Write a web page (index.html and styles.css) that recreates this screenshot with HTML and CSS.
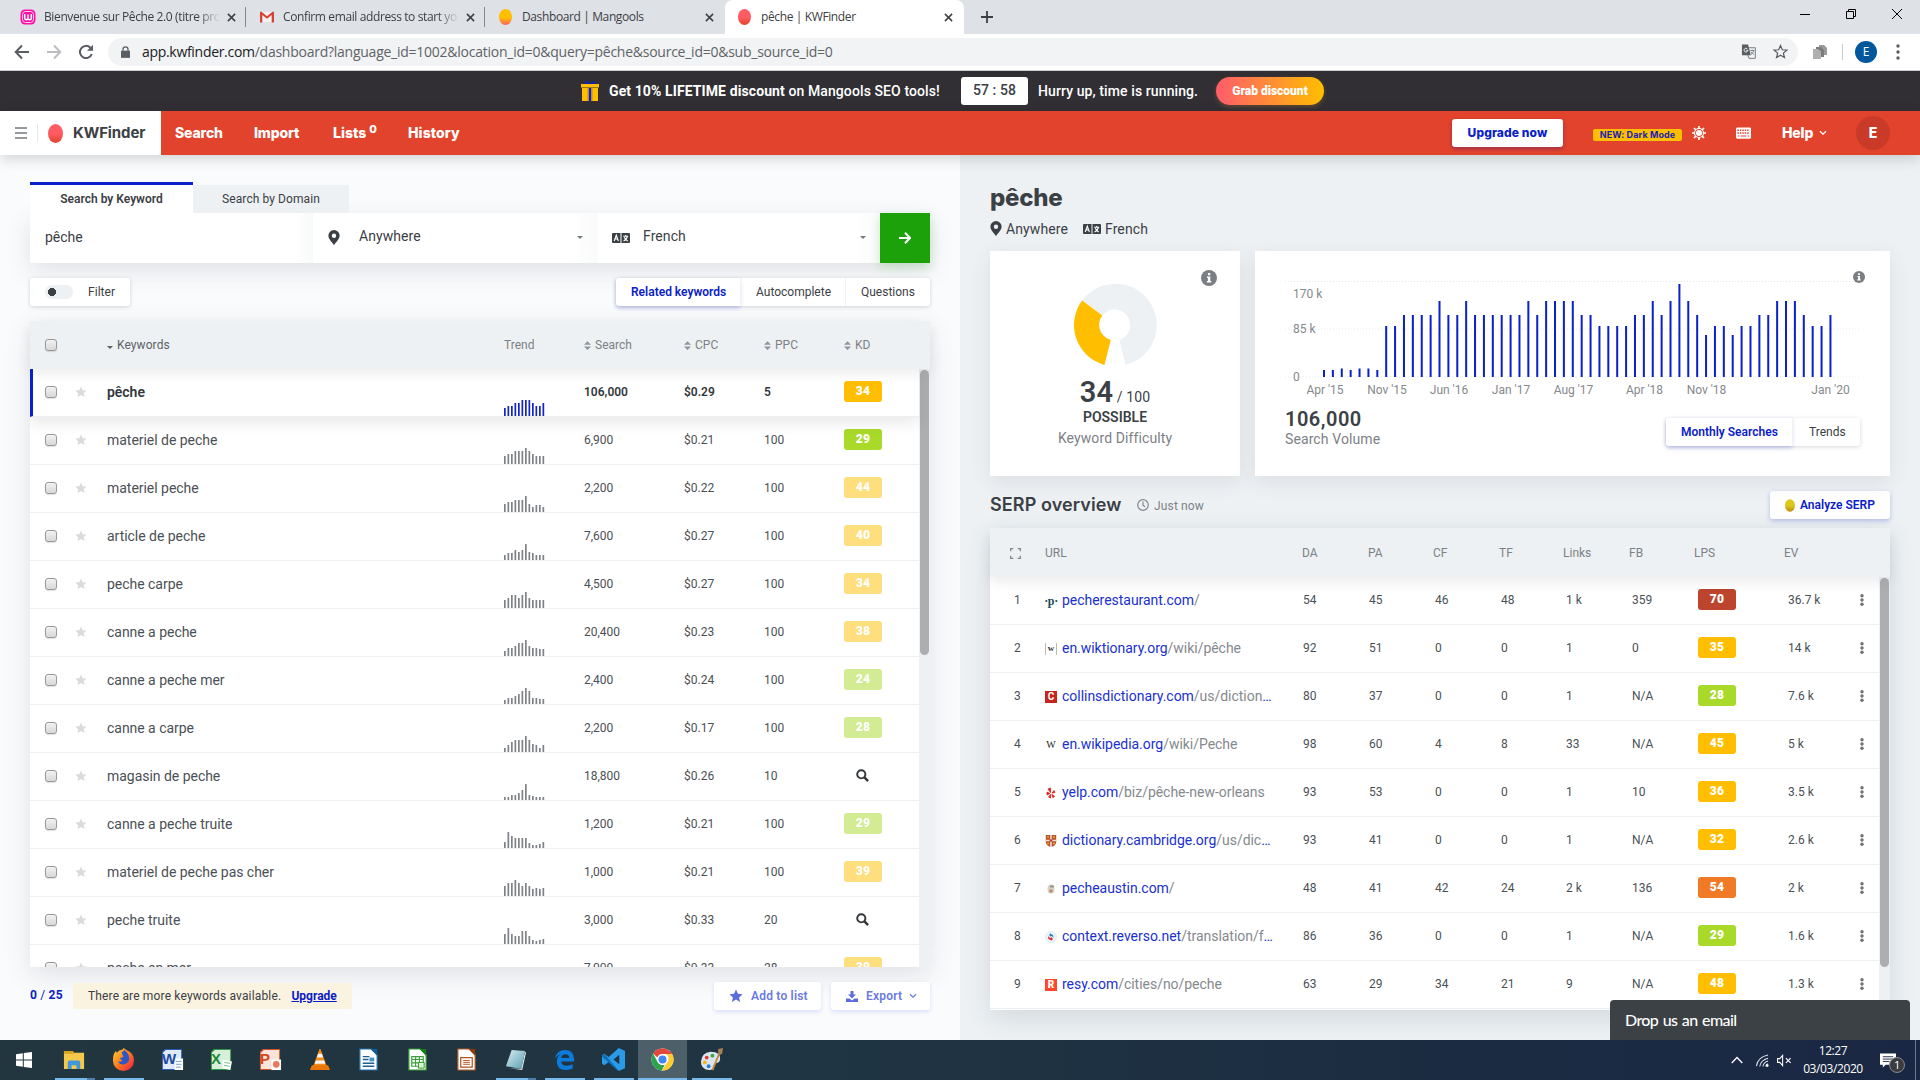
FILE: index.html
```
<!DOCTYPE html>
<html lang="en">
<head>
<meta charset="utf-8">
<title>pêche | KWFinder</title>
<link rel="stylesheet" href="styles.css">
</head>
<body>
<svg class="defs" width="0" height="0" aria-hidden="true">
  <defs>
    <linearGradient id="gRed" x1="0" y1="0" x2="0" y2="1"><stop offset=".5" stop-color="#ff5c63"/><stop offset="1" stop-color="#e2432c"/></linearGradient>
    <linearGradient id="gYel" x1="0" y1="0" x2="0" y2="1"><stop offset=".55" stop-color="#ffbe00"/><stop offset="1" stop-color="#ff6060"/></linearGradient>
    <linearGradient id="gGold" x1="0" y1="0" x2="0" y2="1"><stop offset=".5" stop-color="#dcc81c"/><stop offset="1" stop-color="#c08a10"/></linearGradient>
    <linearGradient id="gFox" x1="0" y1="0" x2="1" y2="1"><stop offset="0" stop-color="#ffd23a"/><stop offset=".5" stop-color="#ff7a1a"/><stop offset="1" stop-color="#e5154f"/></linearGradient>
    <linearGradient id="gNote" x1="0" y1="0" x2="1" y2="1"><stop offset="0" stop-color="#d8eef2"/><stop offset="1" stop-color="#5a9db0"/></linearGradient>
  </defs>
  <symbol id="x" viewBox="0 0 10 10"><path d="M1 1l8 8M9 1L1 9" stroke="#3c4043" stroke-width="1.7" fill="none"/></symbol>
  <symbol id="pin" viewBox="0 0 12 15"><path fill="#3b4045" fill-rule="evenodd" d="M6 0a5.6 5.6 0 0 1 5.600 5.700C11.600 9 8 12 6 15 4 12 .4 9 .4 5.700A5.600 5.600 0 0 1 6 0zm0 3.500a2.200 2.200 0 1 0 0 4.400 2.200 2.200 0 0 0 0-4.400z"/></symbol>
  <symbol id="lang" viewBox="0 0 18 10"><path fill="#3b4045" d="M1 0h7.500v10H1a1 1 0 0 1-1-1V1a1 1 0 0 1 1-1zM9.500 0H17a1 1 0 0 1 1 1v8a1 1 0 0 1-1 1H9.500z"/><path d="M2.200 8L4.300 2.200 6.400 8M3 6h2.700M11.200 3.300h5M13.700 2v1.300M15.400 3.500c-.5 2-2 3.600-3.800 4.500M12.300 4.300c.6 1.700 1.900 3 3.500 3.700" fill="none" stroke="#fff" stroke-width="1.100"/></symbol>
  <symbol id="star" viewBox="0 0 24 24"><path d="M12 1l3.300 7.300 7.900.8-5.900 5.300 1.700 7.800-7-4-7 4 1.700-7.800L.8 9.100l7.900-.8z"/></symbol>
  <symbol id="sort" viewBox="0 0 8 10"><path d="M0 4L4 0l4 4zM0 6h8L4 10z" fill="#8f959a"/></symbol>
  <symbol id="mag" viewBox="0 0 14 14"><circle cx="5.700" cy="5.700" r="4.400" fill="none" stroke="#33383d" stroke-width="2.100"/><path d="M8.800 8.800l4.200 4.200" stroke="#33383d" stroke-width="2.600"/></symbol>
  <symbol id="info" viewBox="0 0 16 16"><circle cx="8" cy="8" r="8" fill="#7b7f83"/><path d="M6.900 3h2.400v2.200H6.900zM6 6.500h3.300v4.600h1v1.500H5.900v-1.500h1V8H6z" fill="#fff"/></symbol>
  <symbol id="down" viewBox="0 0 8 6"><path d="M1 1.200l3 3 3-3" fill="none" stroke="currentColor" stroke-width="1.300"/></symbol>
</svg>

<header class="tabstrip">
  <div class="tab"><svg class="fav" viewBox="0 0 16 16"><rect x=".5" y=".5" width="15" height="15" rx="4.500" fill="#ff0fa5"/><rect x="2.500" y="2.500" width="11" height="11" rx="3" fill="none" stroke="#fff" stroke-width=".8"/><path d="M4.700 5v4q0 1.700 1.600 1.700T8 9V5.500V9q0 1.700 1.700 1.700T11.300 9V5" fill="none" stroke="#fff" stroke-width="1.500"/></svg><span class="tt fade">Bienvenue sur Pêche 2.0 (titre prov</span><svg class="cx"><use href="#x"/></svg></div>
  <div class="tab"><svg class="fav" viewBox="0 0 16 16"><path d="M1 3h14v10H1z" fill="#f1f1f1"/><path d="M1 13.500V2.800h1.500L8 7.300l5.500-4.500H15v10.700h-2.300V6L8 9.800 3.300 6v7.500z" fill="#d93f33"/></svg><span class="tt fade">Confirm email address to start you</span><svg class="cx"><use href="#x"/></svg></div>
  <div class="tab"><svg class="fav" viewBox="0 0 16 16"><ellipse cx="7.500" cy="8" rx="6.500" ry="8" fill="url(#gYel)"/></svg><span class="tt">Dashboard | Mangools</span><svg class="cx"><use href="#x"/></svg></div>
  <div class="tab on"><svg class="fav" viewBox="0 0 16 16"><ellipse cx="7.500" cy="8" rx="6.500" ry="8" fill="url(#gRed)"/></svg><span class="tt">pêche | KWFinder</span><svg class="cx"><use href="#x"/></svg></div>
  <svg class="plus" viewBox="0 0 12 12"><path d="M6 0v12M0 6h12" stroke="#3c4043" stroke-width="1.800"/></svg>
  <div class="winbtns">
    <svg viewBox="0 0 10 10"><path d="M0 5.500h10" stroke="#000"/></svg>
    <svg viewBox="0 0 10 10"><path d="M.5 2.500h7v7h-7zM2.500 2.500v-2h7v7h-2" fill="none" stroke="#000"/></svg>
    <svg viewBox="0 0 10 10"><path d="M0 0l10 10M10 0L0 10" stroke="#000"/></svg>
  </div>
</header>

<div class="toolbar">
  <div class="navs">
    <svg viewBox="0 0 16 16"><path d="M15 8H2M8 1.500L1.700 8 8 14.500" fill="none" stroke="#5a5d61" stroke-width="2"/></svg>
    <svg viewBox="0 0 16 16"><path d="M1 8h13M8 1.500L14.300 8 8 14.500" fill="none" stroke="#bbbdc0" stroke-width="2"/></svg>
    <svg viewBox="0 0 16 16"><path d="M13.800 10a6.100 6.100 0 1 1-1.400-6.300" fill="none" stroke="#5a5d61" stroke-width="2"/><path d="M15 .8v6H9z" fill="#5a5d61"/></svg>
  </div>
  <div class="omni">
    <svg class="lock" viewBox="0 0 10 13"><path d="M0 5h10v8H0z" fill="#5a5d61"/><path d="M2.200 5V3.500a2.800 2.800 0 0 1 5.600 0V5" fill="none" stroke="#5a5d61" stroke-width="1.400"/></svg>
    <span class="url"><b>app.kwfinder.com</b>/dashboard?language_id=1002&amp;location_id=0&amp;query=pêche&amp;source_id=0&amp;sub_source_id=0</span>
    <svg class="oi" viewBox="0 0 16 16"><path d="M7 4h8.300v11.300H8.500L7 11z" fill="#f1f3f4" stroke="#74777b"/><path d="M1 .5h6.500l3 11.500H1z" fill="#5a5d61"/><path d="M7 5.500a2 2 0 1 0 .3 1.300H5.500" fill="none" stroke="#fff" stroke-width="1"/><path d="M9.800 7h4.500M12 6v1M13.500 7c-.3 1.800-1.300 3-2.800 4M10.800 8.500l3 3" fill="none" stroke="#74777b"/></svg>
    <svg class="oi" viewBox="0 0 24 24"><path d="M12 2.500l2.900 6.700 7.200.6-5.500 4.800 1.700 7.100-6.300-3.800-6.300 3.800 1.700-7.100L1.900 9.800l7.200-.6z" fill="none" stroke="#5a5d61" stroke-width="2"/></svg>
  </div>
  <svg class="ext" viewBox="0 0 14 14"><path d="M6 0h5l3 3v7H6z" fill="#9a9a9a"/><path d="M3 2h5l3 3v7H3z" fill="#7c7c7c"/><path d="M0 4h5l3 2.500V14H0z" fill="#b0b0b0"/></svg>
  <i class="vsep"></i>
  <span class="av">E</span>
  <svg class="kebab" viewBox="0 0 4 16"><g fill="#5a5d61"><circle cx="2" cy="2" r="1.700"/><circle cx="2" cy="8" r="1.700"/><circle cx="2" cy="14" r="1.700"/></g></svg>
</div>

<div class="promo">
  <svg class="gift" viewBox="0 0 18 20"><path d="M4 0q3 0 5 3 2-3 5-3l-1 3.500H5z" fill="#0a20d0"/><path d="M0 3h18v3.500H0zM1 7h16v13H1z" fill="#ffbe00"/><path d="M7.700 7h2.600v13H7.700z" fill="#0a20d0"/><path d="M6.500 7v13M11.500 7v13" stroke="#d99c00" stroke-width=".7"/></svg>
  <span class="ptext"><b>Get 10% LIFETIME discount</b> on Mangools SEO tools!</span>
  <span class="timer">57 : 58</span>
  <span class="hurry">Hurry up, time is running.</span>
  <span class="grab">Grab discount</span>
</div>

<nav class="appbar">
  <div class="brand">
    <svg class="burger" viewBox="0 0 12 12"><path d="M0 1h12M0 6h12M0 11h12" stroke="#76797d" stroke-width="1.500"/></svg>
    <i></i>
    <svg class="mango" viewBox="0 0 15 19"><ellipse cx="7.500" cy="9.500" rx="7.500" ry="9.500" fill="url(#gRed)"/></svg>
    <span>KWFinder</span>
  </div>
  <div class="links"><a>Search</a><a>Import</a><a>Lists <sup>0</sup></a><a>History</a></div>
  <div class="right">
    <span class="upnow">Upgrade now</span>
    <span class="newdm">NEW: Dark Mode</span>
    <svg class="sun" viewBox="0 0 14 14"><circle cx="7" cy="7" r="3" fill="#fff"/><circle cx="7" cy="7" r="4.500" fill="none" stroke="#fff" stroke-width="1.200"/><path d="M7 0v3M7 11v3M0 7h3M11 7h3M2 2l2 2M10 10l2 2M12 2l-2 2M4 10l-2 2" stroke="#fff" stroke-width="1.700"/></svg>
    <svg class="kb" viewBox="0 0 16 12"><rect width="16" height="12" rx="1.500" fill="#fff"/><path d="M1.500 3h13M1.500 6h13" stroke="#e2432c" stroke-width="1.500" stroke-dasharray="1.600 1"/><path d="M2 9.200h1.500M5 9.200h6M12.500 9.200H14" stroke="#e2432c" stroke-width="1.200"/></svg>
    <span class="help">Help</span><svg class="chev"><use href="#down"/></svg>
    <span class="me">E</span>
  </div>
</nav>

<main>
  <section class="left">
    <div class="stabs"><span class="stab on">Search by Keyword</span><span class="stab">Search by Domain</span></div>
    <div class="sform">
      <div class="f1">pêche</div>
      <div class="f2"><svg class="pin"><use href="#pin"/></svg><span>Anywhere</span><i class="caret"></i></div>
      <div class="f3"><svg class="lang"><use href="#lang"/></svg><span>French</span><i class="caret"></i></div>
      <div class="go"><svg viewBox="0 0 12 12"><path d="M0 6h11M6 .8L11 6l-5 5.200" fill="none" stroke="#fff" stroke-width="2"/></svg></div>
    </div>
    <div class="filters">
      <div class="filter"><i class="toggle"></i>Filter</div>
      <div class="seg"><span class="on">Related keywords</span><span>Autocomplete</span><span>Questions</span></div>
    </div>
    <div class="kwtable">
      <div class="kwhead">
        <i class="cb"></i><span></span>
        <span class="dark"><i class="tri"></i>Keywords</span><span>Trend</span>
        <span><svg class="sort"><use href="#sort"/></svg>Search</span>
        <span><svg class="sort"><use href="#sort"/></svg>CPC</span>
        <span><svg class="sort"><use href="#sort"/></svg>PPC</span>
        <span><svg class="sort"><use href="#sort"/></svg>KD</span>
      </div>
      <div class="scroller"><div class="rows" id="kwrows"></div><div class="track"><i class="thumb t1"></i></div></div>
    </div>
    <div class="kwfoot">
      <span class="count"><b>0</b> / <b>25</b></span>
      <span class="notice">There are more keywords available. <a>Upgrade</a></span>
      <span class="btn add"><svg viewBox="0 0 24 24"><use href="#star"/></svg>Add to list</span>
      <span class="btn exp"><svg viewBox="0 0 12 11"><path d="M4.500 0h3v3.500H10L6 7.500l-4-4h2.500zM0 7.500h3.500L6 9.500l2.500-2H12V11H0z"/></svg>Export<svg class="chev"><use href="#down"/></svg></span>
    </div>
  </section>

  <section class="side">
    <h1>pêche</h1>
    <div class="meta"><svg class="pin"><use href="#pin"/></svg><span>Anywhere</span><svg class="lang"><use href="#lang"/></svg><span>French</span></div>
    <div class="cards">
      <div class="card kd">
        <svg class="info"><use href="#info"/></svg>
        <svg class="donut" viewBox="-42 -42 84 84">
          <path d="M-32.900-24.500A41.300 41.300 0 1 1 10.800 39.900L4.200 15A15.600 15.600 0 1 0-12.700-9.500z" fill="#edf1f4"/>
          <path d="M-10.600 39.900A41.300 41.300 0 0 1-32.900-24.500L-12.700-9.500A15.600 15.600 0 0 0-4.200 15z" fill="#ffbe00"/>
        </svg>
        <div class="score"><b>34</b> / 100</div>
        <div class="poss">POSSIBLE</div>
        <div class="cap">Keyword Difficulty</div>
      </div>
      <div class="card vol">
        <svg class="chart" id="chart" viewBox="0 0 575 125"></svg>
        <svg class="info small"><use href="#info"/></svg>
        <div class="volrow">
          <div><div class="num">106,000</div><div class="cap">Search Volume</div></div>
          <div class="seg"><span class="on">Monthly Searches</span><span>Trends</span></div>
        </div>
      </div>
    </div>
    <div class="serphead">
      <h2>SERP overview</h2>
      <svg class="clock" viewBox="0 0 12 12"><circle cx="6" cy="6" r="5.300" fill="none" stroke="#85898d" stroke-width="1.200"/><path d="M6 2.500V6.200l2 1.500" fill="none" stroke="#85898d" stroke-width="1.200"/></svg>
      <span class="just">Just now</span>
      <span class="analyze"><svg viewBox="0 0 10 13"><ellipse cx="5" cy="6.500" rx="5" ry="6.200" fill="url(#gGold)"/></svg>Analyze SERP</span>
    </div>
    <div class="serp">
      <div class="shead"><span><svg class="expand" viewBox="0 0 10 10"><path d="M.6 3V.6H3M7 .6h2.400V3M9.400 7v2.400H7M3 9.400H.6V7" fill="none" stroke="#85898d" stroke-width="1.200"/></svg></span><span>URL</span><span>DA</span><span>PA</span><span>CF</span><span>TF</span><span>Links</span><span>FB</span><span>LPS</span><span>EV</span></div>
      <div class="scroller"><div class="rows" id="serprows"></div><div class="track"><i class="thumb t2"></i></div></div>
    </div>
  </section>
</main>

<div class="chat">Drop us an email</div>

<footer class="taskbar">
  <div class="ti win"><svg viewBox="0 0 24 24"><path d="M4 6.200l6.800-1v6.300H4zM11.800 5L20 4v7.500h-8.200zM4 12.500h6.800v6.300l-6.800-1zM11.800 12.500H20V20l-8.200-1z" fill="#fff"/></svg></div>
  <div class="ti run two"><svg viewBox="0 0 24 24"><path d="M1 3h9l2 2h10v17H1z" fill="#f5c84b"/><path d="M1 3h9l2 3H1z" fill="#d9a21b"/><path d="M5 22v-7q0-2 2-2h9q2 0 2 2v7h-4v-4H9v4z" fill="#3f98dc"/></svg></div>
  <div class="ti run"><svg viewBox="0 0 24 24"><path d="M2 6l2-3 1 2q2-3 6-3.500l1-1.500 3 2q8 3 8 11a11 11 0 0 1-22 0Q1 9 2 6z" fill="url(#gFox)"/><path d="M10 5l3-3q5 4 5 9a6.500 6.500 0 0 1-12 3q3 1 5-1l-3-2 4-2z" fill="#2b57c9"/></svg></div>
  <div class="ti"><svg viewBox="0 0 24 24"><path d="M4 1h18v22H1V4z" fill="#2b5bb3"/><path d="M5 2h16v20H2V5z" fill="#dfe9f8"/><path d="M15 11h8v12H14z" fill="#fff"/><path d="M15.500 14h6M15.500 17h6M15.500 20h5" stroke="#7b9bd0"/></svg><b class="wd">W</b></div>
  <div class="ti"><svg viewBox="0 0 24 24"><path d="M4 1h18v22H1V4z" fill="#2f9a45"/><path d="M5 2h16v20H2V5z" fill="#d6efd6"/><path d="M13 12l10 2-2 9-8-2z" fill="#fff"/><path d="M15 15l6 1M14.500 18l6 1" stroke="#6fbf7c"/></svg><b class="xl">X</b></div>
  <div class="ti"><svg viewBox="0 0 24 24"><path d="M4 1h18v22H1V4z" fill="#d4522a"/><path d="M5 2h16v20H2V5z" fill="#fbe3d8"/><path d="M13 12h10v11H13z" fill="#fff"/><circle cx="18" cy="17" r="3.500" fill="#e8795a"/></svg><b class="pp">P</b></div>
  <div class="ti"><svg viewBox="0 0 24 24"><path d="M12 1h1l7 19H5z" fill="#f58a1c"/><path d="M10.500 6h4l1.300 4H9.200zM8.200 13h8.700l1 3.500H7z" fill="#f4f4f4"/><path d="M4 18h17l2 5H2z" fill="#e97808"/></svg></div>
  <div class="ti"><svg viewBox="0 0 24 24"><path d="M3 1h12l6 6v16H3z" fill="#fff" stroke="#1f6fae" stroke-width="1.200"/><path d="M14 1h7v7z" fill="#0f5f9f"/><path d="M6 9h7M6 12h6M6 16h12M6 19h12" stroke="#1f5f94" stroke-width="1.500"/><path d="M13 10h5v4h-5z" fill="#4591c6"/></svg></div>
  <div class="ti"><svg viewBox="0 0 24 24"><path d="M3 1h12l6 6v16H3z" fill="#fff" stroke="#2c9a2c" stroke-width="1.200"/><path d="M14 1h7v7z" fill="#128012"/><path d="M6 9h12v10H6zM6 12h12M6 15.500h12M10 9v10M14 9v10" fill="none" stroke="#3c9f3c" stroke-width="1.200"/><path d="M13 15h6v6h-6z" fill="#d8f0d0" stroke="#2c9a2c"/></svg></div>
  <div class="ti"><svg viewBox="0 0 24 24"><path d="M3 1h12l6 6v16H3z" fill="#fff" stroke="#b3561f" stroke-width="1.200"/><path d="M14 1h7v7z" fill="#8f3d0c"/><path d="M6 10h12v10H6z" fill="none" stroke="#b3561f" stroke-width="1.300"/><path d="M8.500 13h7M8.500 15h7M8.500 17h7" stroke="#b3561f"/></svg></div>
  <div class="ti run two"><svg viewBox="0 0 24 24"><path d="M8 2l14 1-4 19-16-3z" fill="url(#gNote)"/><path d="M22 4l1 1-4 18-14-2 13 1z" fill="#dfe6e8"/></svg></div>
  <div class="ti run"><svg viewBox="0 0 24 24"><path d="M2 11Q4 2 12.500 2 22 2 22 12v2H8.500q.5 4.500 6 4.500 3.500 0 6-1.500v4.500q-3 1.500-7 1.500-9.500 0-9.500-9 0-5 4.500-8-3.500 1-6.500 5zM8.500 10.500H17q0-4-4-4t-4.500 4z" fill="#0c7bdc"/></svg></div>
  <div class="ti run"><svg viewBox="0 0 24 24"><path d="M17.500 0L24 3v18l-6.500 3L7 14.500 2.500 18 0 16.500v-9L2.500 6 7 9.500zM18 7l-6 5 6 5z" fill="#2a9be8"/><path d="M0 7.500L2.500 6l15 18H17L0 9z" fill="#0f70b8"/></svg></div>
  <div class="ti run active"><svg viewBox="0 0 24 24"><circle cx="12" cy="12" r="11.500" fill="#fff"/><path d="M12 .5A11.500 11.500 0 0 1 22 6.300H12a5.700 5.700 0 0 0-5.300 3.600L2.200 5.800A11.500 11.500 0 0 1 12 .5z" fill="#e0483a"/><path d="M22 6.300A11.500 11.500 0 0 1 11.500 23.500l5.200-8.400a5.700 5.700 0 0 0-1-8.800z" fill="#fbcb2f"/><path d="M2.200 5.800L7 14.900a5.700 5.700 0 0 0 7.500 2.300l-3.300 6.300A11.500 11.500 0 0 1 2.200 5.800z" fill="#2ea24c"/><circle cx="12" cy="12" r="5.400" fill="#fff"/><circle cx="12" cy="12" r="4.200" fill="#4285f4"/></svg></div>
  <div class="ti run"><svg viewBox="0 0 24 24"><path d="M11 4q11 0 10 8-1 4-5 4-2 1-2 4-1 3-5 3-8-1-8-9Q2 5 11 4z" fill="#d9e6f0"/><circle cx="7" cy="10" r="2" fill="#e03c31"/><circle cx="13" cy="8" r="2" fill="#3aa845"/><circle cx="5" cy="15" r="2" fill="#f5b51d"/><circle cx="9" cy="19" r="2" fill="#2f78d0"/><path d="M20 6l-7 17" stroke="#c6873c" stroke-width="2"/><path d="M19 1l5-1-1 6-4 2z" fill="#a98257"/></svg></div>
  <div class="tray">
    <svg class="up" viewBox="0 0 12 8"><path d="M.7 7L6 1.500 11.300 7" fill="none" stroke="#fff" stroke-width="1.300"/></svg>
    <svg class="wifi" viewBox="0 0 14 14"><path d="M.5 13Q2 3 13 1M4 13.500q1-7 9-9M7.500 13.500q.5-4.500 5.500-6M10.500 13.500q.3-2 2.500-3" fill="none" stroke="#dfe4ea" stroke-width="1.100"/><circle cx="12" cy="12.500" r="1.500" fill="#fff"/></svg>
    <svg class="volu" viewBox="0 0 16 13"><path d="M.6 4.500H3L6 1v11L3 8.500H.6z" fill="none" stroke="#fff" stroke-width="1.100"/><path d="M9.500 4l5 5M14.500 4l-5 5" stroke="#fff" stroke-width="1.200"/></svg>
    <div class="time"><span>12:27</span><span>03/03/2020</span></div>
    <div class="notif"><svg viewBox="0 0 17 15"><path d="M0 0h17v12H6l-3 3v-3H0z" fill="#fff"/><path d="M3 3.500h11M3 6h11M3 8.500h7" stroke="#1c2b42"/></svg><em>1</em></div>
    <i class="peek"></i>
  </div>
</footer>
<script src="app.js"></script>
</body>
</html>
```
FILE: styles.css
```
* { box-sizing: border-box; }
html, body { margin: 0; height: 100%; overflow: hidden; }
body { width: 1920px; height: 1080px; display: flex; flex-direction: column; font: 12px/16px Roboto, "Liberation Sans", sans-serif; color: #3b4045; background: #fafbfd; }
i, em { font-style: normal; }
svg { flex: none; display: block; }
.defs { position: absolute; }
b { font-weight: 700; }

/* browser chrome */
.tabstrip { flex: none; height: 34px; background: #dee1e6; display: flex; align-items: center; padding-left: 8px; font: 12px/16px "Open Sans", "Noto Sans", sans-serif; color: #3c4043; }
.tab { width: 239px; height: 34px; display: flex; align-items: center; padding: 0 10px 0 12px; border-right: 1px solid transparent; }
.tab:nth-child(-n+2) { background: linear-gradient(#85888d, #85888d) 100% 7px / 1px 20px no-repeat; }
.tab.on { background: #fff; border-radius: 8px 8px 0 0; }
.fav { width: 16px; height: 16px; margin-right: 8px; }
.tt { width: 176px; overflow: hidden; white-space: nowrap; letter-spacing: -.38px; }
.fade { -webkit-mask-image: linear-gradient(90deg, #000 154px, transparent 176px); mask-image: linear-gradient(90deg, #000 154px, transparent 176px); }
.cx { width: 9px; height: 9px; margin-left: 8px; }
.plus { width: 12px; height: 12px; margin-left: 17px; }
.winbtns { margin-left: auto; display: flex; gap: 36px; padding: 0 18px 6px 0; }
.winbtns svg { width: 10px; height: 10px; }
.toolbar { flex: none; height: 37px; background: #fff; border-bottom: 1px solid #c9ccd0; display: flex; align-items: center; padding: 0 20px 0 14px; }
.navs { display: flex; gap: 16px; width: 94px; }
.navs svg { width: 16px; height: 16px; }
.omni { width: 1691px; height: 28px; margin-top: -1px; border-radius: 14px; background: #f1f3f4; display: flex; align-items: center; padding: 0 10px 0 13px; font: 14px/20px "Open Sans", "Noto Sans", sans-serif; color: #5f6368; }
.lock { width: 9px; height: 12px; margin-right: 12px; }
.url { flex: 1; letter-spacing: -.25px; white-space: nowrap; }
.url b { font-weight: 400; color: #202124; letter-spacing: -.3px; }
.oi { width: 15px; height: 15px; margin-left: 17px; }
.ext { width: 14px; height: 14px; margin-left: 15px; }
.vsep { width: 1px; height: 16px; background: #c8cace; margin: 0 12px 0 15px; }
.av { width: 22px; height: 22px; border-radius: 50%; background: #00579c; color: #fff; text-align: center; font: 12px/22px "Open Sans", sans-serif; }
.kebab { width: 4px; height: 16px; margin-left: 19px; }

/* promo bar */
.promo { flex: none; height: 40px; background: #312f34; color: #fff; display: flex; align-items: center; padding: 0 0 1px 581px; font-size: 14px; }
.gift { width: 18px; height: 20px; margin-right: 10px; }
.ptext { width: 352px; font-weight: 500; letter-spacing: .1px; white-space: nowrap; }
.timer { width: 67px; height: 28px; border-radius: 3px; background: #fff; color: #3b4045; text-align: center; font-weight: 500; line-height: 27px; letter-spacing: .1px; margin-top: 1px; }
.hurry { width: 178px; margin-left: 10px; font-weight: 500; letter-spacing: .1px; white-space: nowrap; }
.grab { width: 108px; height: 28px; margin-top: 1px; border-radius: 14px; background: linear-gradient(90deg, #ff5c6b, #ffbe00); font: 900 12px/28px Roboto, sans-serif; text-align: center; box-shadow: 0 2px 4px rgba(255, 150, 60, .25); }

/* application bar */
.appbar { flex: none; height: 44px; background: #e2432c; display: flex; align-items: stretch; color: #fff; position: relative; font: 800 14px/20px Inter, Roboto, sans-serif; letter-spacing: -.15px; box-shadow: 0 4px 14px rgba(0, 0, 0, .16); }
.brand { width: 161px; background: #fff; color: #3b4045; display: flex; align-items: center; padding-left: 15px; font-weight: 700; font-size: 15px; letter-spacing: -.1px; }
.burger { width: 12px; height: 12px; }
.brand i { width: 1px; height: 18px; background: #e6e8ea; margin: 0 10px; }
.mango { width: 15px; height: 19px; margin-right: 10px; }
.links { display: flex; align-items: center; padding-left: 14px; }
.links a { margin-right: 30px; white-space: nowrap; }
.links a:nth-child(-n+2) { width: 49px; }
.links a:nth-child(3) { width: 45px; letter-spacing: 0; }
.links a:nth-child(4) { letter-spacing: .1px; }
.links sup { font-size: 11px; line-height: 0; vertical-align: 5px; }
.right { margin-left: auto; display: flex; align-items: center; padding-right: 30px; }
.upnow { width: 111px; height: 28px; border-radius: 3px; background: #fff; color: #0a20c8; font-size: 12px; line-height: 28px; text-align: center; letter-spacing: .1px; box-shadow: 0 2px 4px rgba(60, 20, 120, .4); }
.newdm { width: 89px; height: 12px; margin: 4px 10px 0 30px; background: #ffbe00; color: #1a1fb0; border-radius: 2px; font: 700 9px/12px Inter, sans-serif; letter-spacing: .1px; text-align: center; }
.sun { width: 14px; height: 14px; }
.kb { width: 15px; height: 12px; margin: 0 31px 0 30px; }
.help { width: 36px; }
.chev { width: 8px; height: 6px; }
.appbar .chev { margin: 0 29px 0 1px; }
.me { width: 34px; height: 34px; border-radius: 50%; background: #c93b28; text-align: center; line-height: 34px; }

main { flex: none; height: 885px; display: flex; }
.left { width: 960px; background: #fafbfd; padding: 27px 30px 0; }
.side { width: 960px; background: #edf1f4; padding: 0 30px; }

/* search form */
.stabs { display: flex; align-items: flex-end; height: 31px; }
.stab { width: 156px; height: 28px; line-height: 29px; text-align: center; background: #edf1f4; letter-spacing: .08px; }
.stab.on { width: 163px; height: 31px; border-top: 3px solid #0a20c8; background: #fff; font-weight: 600; letter-spacing: 0; }
.sform { display: flex; height: 50px; box-shadow: 0 8px 24px rgba(50, 60, 70, .13); background: #fff; font-size: 14px; line-height: 46px; }
.f1 { width: 283px; padding: 1px 15px 0; background: linear-gradient(90deg, #fff 265px, #f8f9fa 283px); }
.f2 { width: 284px; }
.f3 { width: 283px; }
.f2, .f3 { display: flex; align-items: center; padding: 0 14px 0 15px; background: linear-gradient(90deg, #fff 260px, #f9fafb 284px); }
.pin { width: 12px; height: 15px; }
.lang { width: 18px; height: 10px; }
.f2 span, .f3 span { flex: 1; margin-left: 19px; padding-bottom: 5px; letter-spacing: .08px; }
.f3 span { margin-left: 13px; }
.f2 .pin, .f3 .lang { margin-top: -1px; }
.caret { width: 0; height: 0; border: 3px solid transparent; border-top: 3px solid #777b80; border-bottom: 0; margin-top: -2px; }
.go { width: 50px; background: #1da10b; display: flex; align-items: center; justify-content: center; box-shadow: 0 4px 10px rgba(29, 161, 11, .2); }
.go svg { width: 12px; height: 12px; }
.filters { display: flex; justify-content: space-between; margin-top: 15px; }
.filter { width: 100px; height: 28px; background: #fff; border-radius: 3px; box-shadow: 0 1px 4px rgba(50, 60, 70, .2); display: flex; align-items: center; gap: 15px; padding-left: 15px; letter-spacing: .05px; }
.toggle { width: 28px; height: 14px; border-radius: 7px; background: radial-gradient(circle at 7px 7px, #3b4045 3.800px, transparent 4.300px) #edf1f4; }
.seg { display: flex; height: 28px; line-height: 28px; background: #fff; border-radius: 3px; box-shadow: 0 1px 4px rgba(50, 60, 70, .2); }
.seg span { padding: 0 15px; border-left: 1px solid #f1f3f5; white-space: nowrap; }
.seg .on { color: #0a20c8; font-weight: 600; border: 0; box-shadow: 0 2px 4px rgba(10, 32, 200, .22); border-radius: 3px 0 0 3px; }
.filters .seg span:nth-child(1) { width: 124px; }
.filters .seg span:nth-child(2) { width: 105px; }
.filters .seg span:nth-child(3) { width: 85px; }

/* keyword table */
.kwtable { margin-top: 15px; height: 646px; box-shadow: 0 8px 24px rgba(50, 60, 70, .13); }
.kwhead, .kw { display: grid; grid-template-columns: 30px 32px 397px 80px 100px 80px 80px 1fr; align-items: center; padding-left: 15px; }
.kwhead { height: 48px; background: #edf1f4; color: #7d8185; position: relative; box-shadow: 0 5px 12px rgba(0, 0, 0, .07); padding-bottom: 1px; }
.kwhead .dark { color: #5d6166; letter-spacing: .08px; }
.tri { display: inline-block; border: 3px solid transparent; border-top: 3px solid #5d6166; border-bottom: 0; margin-right: 4px; }
.sort { display: inline-block; width: 7px; height: 9px; margin-right: 4px; vertical-align: -1px; }
.scroller { display: flex; overflow: hidden; height: 598px; }
.rows { width: 889px; background: #fff; }
.track { width: 11px; background: #edf1f4; padding: 1px; }
.thumb { display: block; width: 9px; border-radius: 5px; background: #adaeb0; }
.t1 { height: 285px; }
.t2 { height: 389px; }
.kw { height: 48px; border-bottom: 1px solid #edf0f3; color: #4b5055; }
.kw > span, .kw > .cb, .kw > .st, .kw > .mg { margin-bottom: 2px; }
.kw:first-child { position: relative; border-left: 3px solid #0a20c8; padding-left: 12px; font-weight: 600; color: #33383d; box-shadow: 0 6px 14px rgba(0, 0, 0, .09); }
.cb { width: 12px; height: 12px; border: 1px solid #999; border-radius: 3px; background: linear-gradient(#f2f2f2, #d8d8d8); box-shadow: 0 1px 1px rgba(0, 0, 0, .12); }
.st { width: 12px; height: 12px; fill: #d8dadd; }
.kw > .k { font-size: 14px; margin-bottom: 1px; letter-spacing: -.03px; }
.tr { align-self: end; width: 41px; height: 16px; color: #7f8286; }
.kw:first-child .tr { color: #1226c4; }
.badge { display: block; width: 38px; height: 21px; border-radius: 3px; text-align: center; font: 900 12px/20px Roboto, sans-serif; letter-spacing: .3px; color: #fff; }
.dim { opacity: .5; }
.y { background: #ffbe00; } .g { background: #a9da2a; } .o { background: #f07a26; } .r { background: #bd442d; }
.mg { width: 13px; height: 13px; margin-left: 12px; }
.kwfoot { margin-top: 15px; height: 28px; display: flex; align-items: center; letter-spacing: .2px; }
.count { width: 43px; color: #0a20c8; white-space: nowrap; padding-bottom: 3px; }
.notice { width: 279px; height: 26px; line-height: 26px; padding-left: 15px; background: #faf3e0; border-radius: 2px; white-space: nowrap; letter-spacing: .16px; }
.notice a { margin-left: 7px; font-weight: 700; color: #0a20c8; text-decoration: underline; letter-spacing: 0; }
.btn { height: 28px; border-radius: 3px; background: #fff; box-shadow: 0 2px 4px rgba(10, 32, 200, .13); color: #6b7ade; font-weight: 600; display: flex; align-items: center; }
.btn svg { width: 14px; height: 14px; fill: #5c6cdc; margin-right: 8px; }
.btn .chev { width: 8px; height: 6px; fill: none; margin: 0 0 0 7px; }
.add { width: 107px; margin-left: auto; padding-left: 15px; }
.exp { width: 99px; margin-left: 10px; padding-left: 15px; }
.exp svg { width: 12px; height: 11px; }

/* detail panel */
h1 { margin: 29px 0 0; font: 800 24px/28px Inter, sans-serif; letter-spacing: -.25px; height: 36px; }
.meta { display: flex; align-items: center; height: 17px; font-size: 14px; letter-spacing: .1px; }
.meta span { margin: 0 15px 0 4px; }
.meta .lang { margin-right: 0; }
.cards { display: flex; gap: 15px; margin-top: 14px; height: 225px; }
.card { background: #fff; box-shadow: 0 6px 20px rgba(50, 60, 70, .09); position: relative; }
.card.kd { width: 250px; display: flex; flex-direction: column; align-items: center; }
.vol { flex: 1; padding: 24px 30px 0; }
.info { position: absolute; width: 16px; height: 16px; right: 23px; top: 19px; }
.info.small { width: 12px; height: 12px; right: 25px; top: 20px; }
.donut { width: 84px; height: 84px; margin-top: 32px; }
.score { margin-top: 7px; font-size: 14px; line-height: 36px; height: 33px; letter-spacing: .1px; }
.score b { font-size: 29px; font-weight: 600; letter-spacing: .2px; }
.poss { font-size: 14px; font-weight: 600; line-height: 20px; }
.cap { font-size: 14px; line-height: 22px; color: #7d8185; letter-spacing: .1px; }
.chart { width: 575px; height: 125px; overflow: visible; font-size: 12px; }
.chart text { fill: #85898d; }
.volrow { display: flex; justify-content: space-between; margin-top: 6px; }
.num { font-size: 20px; font-weight: 600; line-height: 26px; letter-spacing: .5px; }
.num + .cap { line-height: 14px; }
.volrow .seg { margin-top: 12px; }
.volrow .seg span { width: 68px; padding: 0 16px; }
.volrow .seg .on { width: 126px; padding: 0 15px; }
.serphead { display: flex; align-items: center; height: 28px; margin-top: 15px; color: #7d8185; }
h2 { margin: 0; width: 147px; font: 600 18px/24px Inter, sans-serif; letter-spacing: .1px; color: #3b4045; white-space: nowrap; }
.just { letter-spacing: .15px; padding-top: 1px; }
.clock { width: 12px; height: 12px; margin-right: 5px; }
.analyze { margin-left: auto; width: 120px; height: 28px; border-radius: 3px; background: #fff; color: #0a20c8; font-weight: 600; display: flex; align-items: center; padding-left: 15px; box-shadow: 0 2px 5px rgba(10, 32, 200, .25); }
.analyze svg { width: 10px; height: 13px; margin-right: 5px; }
.serp { margin-top: 9px; height: 482px; box-shadow: 0 8px 24px rgba(50, 60, 70, .13); }
.shead, .sr { display: grid; align-items: center; padding-left: 20px; }
.shead { grid-template-columns: 35px 257px 66px 65px 66px 64px 66px 65px 90px 1fr; height: 49px; background: #edf1f4; color: #7d8185; position: relative; box-shadow: 0 5px 12px rgba(0, 0, 0, .08); padding-top: 1px; }
.expand { width: 11px; height: 11px; }
.serp .scroller { height: 433px; }
.sr { grid-template-columns: 35px 258px 66px 66px 66px 65px 66px 66px 90px 72px 1fr; height: 48px; border-bottom: 1px solid #edf0f3; color: #4b5055; }
.sr > * { margin-bottom: 2px; }
.sr > :first-child { padding-left: 4px; }
.u { display: flex; align-items: center; gap: 5px; font-size: 14px; color: #85898d; white-space: nowrap; letter-spacing: -.03px; }
.u em { color: #1a30d0; }
.ic { width: 12px; height: 12px; line-height: 12px; text-align: center; flex: none; margin-top: 3px; }
.ic.p { color: #1d4a55; font: 700 12px/9px "Liberation Serif", serif; display: flex; justify-content: center; align-items: center; letter-spacing: -.4px; }
.ic.wk { color: #333; font: 700 9px/11px "Liberation Serif", serif; border: 1px solid #bbb; border-width: 0 1px; }
.ic.co { background: #c4261d; color: #fff; font: 700 10px/12px Roboto, sans-serif; }
.ic.w { color: #222; font: 10px/12px "Liberation Serif", serif; }
.ic.re { background: #ff462d; color: #fff; font: 900 10px/12px Roboto, sans-serif; }
.dots { width: 4px; height: 12px; fill: #6d7175; }

/* chat launcher overlaps the page above the taskbar */
.chat { position: absolute; left: 1610px; top: 1000px; width: 300px; height: 40px; border-radius: 4px 4px 0 0; background: #3c4146; color: #fff; font: 500 16px/40px Lato, sans-serif; letter-spacing: -.6px; word-spacing: 1px; padding-left: 15px; }

/* taskbar */
.taskbar { flex: none; height: 40px; display: flex; background: linear-gradient(90deg, #22363f, #1f3442 45%, #1b2b42 80%, #1a2744); color: #fff; }
.ti { width: 49px; padding-top: 8px; height: 40px; position: relative; display: flex; justify-content: center; }
.ti svg { width: 23px; height: 23px; }
.ti.win { width: 50px; padding-right: 2px; }
.ti.win svg { width: 24px; height: 24px; }
.ti.run { background: linear-gradient(#76b9ed, #76b9ed) 5px 38px / 40px 2px no-repeat; }
.ti.two { background-image: linear-gradient(90deg, #76b9ed 32px, #4f7fa8 32px); }
.ti.active { background: linear-gradient(#76b9ed, #76b9ed) 0 38px / 49px 2px no-repeat, #4d5f68; }
.ti b { position: absolute; left: 14px; top: 10px; font: 700 15px/18px "Liberation Sans", sans-serif; }
.wd { color: #1d4ba0; } .xl { color: #1e8a38; } .pp { color: #d04a20; }
.tray { margin-left: auto; display: flex; align-items: center; padding-right: 4px; font: 12px/18px "Open Sans", "Noto Sans", sans-serif; letter-spacing: -.4px; }
.up { width: 12px; height: 8px; margin-right: 13px; }
.wifi { width: 13px; height: 13px; margin-right: 8px; }
.volu { width: 15px; height: 13px; }
.time { width: 82px; text-align: center; display: flex; flex-direction: column; }
.notif { position: relative; width: 41px; padding-left: 2px; }
.notif svg { width: 16px; height: 15px; margin-left: 4px; }
.notif em { position: absolute; left: 15px; top: 4px; width: 16px; height: 16px; border-radius: 50%; background: #3a3c40; border: 1px solid #85888c; text-align: center; font: 11px/14px "Open Sans", sans-serif; }
.peek { width: 1px; height: 40px; background: #6c7a88; }
```
FILE: app.js
```
const keywords = [
  ['pêche', '106,000', '$0.29', '5', 34, 'y', [8,10,10,13,13,16,16,16,13,10,10,13]],
  ['materiel de peche', '6,900', '$0.21', '100', 29, 'g', [8,10,10,13,13,13,16,13,10,8,8,8]],
  ['materiel peche', '2,200', '$0.22', '100', 44, 'y dim', [8,10,10,12,12,12,16,8,5,7,7,5]],
  ['article de peche', '7,600', '$0.27', '100', 40, 'y dim', [5,7,7,10,8,10,16,8,7,5,5,5]],
  ['peche carpe', '4,500', '$0.27', '100', 34, 'y dim', [8,10,13,13,10,13,16,10,8,8,8,8]],
  ['canne a peche', '20,400', '$0.23', '100', 38, 'y dim', [5,8,8,10,13,13,16,10,8,8,7,7]],
  ['canne a peche mer', '2,400', '$0.24', '100', 24, 'g dim', [4,6,6,8,10,13,16,13,6,6,5,5]],
  ['canne a carpe', '2,200', '$0.17', '100', 28, 'g dim', [4,7,10,12,12,12,16,12,8,7,4,7]],
  ['magasin de peche', '18,800', '$0.26', '10', null, '', [3,3,5,5,7,10,16,5,4,3,3,3]],
  ['canne a peche truite', '1,200', '$0.21', '100', 29, 'g dim', [6,16,12,10,10,10,10,5,3,3,4,6]],
  ['materiel de peche pas cher', '1,000', '$0.21', '100', 39, 'y dim', [10,13,13,16,13,10,13,10,7,8,7,8]],
  ['peche truite', '3,000', '$0.33', '20', null, '', [10,16,10,8,8,13,13,8,4,3,4,5]],
  ['peche en mer', '7,000', '$0.33', '28', 39, 'y dim', [8,10,10,13,13,13,16,13,10,8,8,8]]
];
const badge = (n, c) => `<span class="badge ${c}">${n}</span>`;
document.getElementById('kwrows').innerHTML = keywords.map(([k, s, c, p, kd, cls, t]) => `
  <div class="kw"><i class="cb"></i><svg class="st" viewBox="0 0 24 24"><use href="#star"/></svg><span class="k">${k}</span>
  <svg class="tr" viewBox="0 0 41 16">${t.map((h, i) => `<rect x="${(i * 3.5).toFixed(1)}" y="${16 - h}" width="1.7" height="${h}" fill="currentColor"/>`).join('')}</svg>
  <span>${s}</span><span>${c}</span><span>${p}</span>${kd === null ? '<svg class="mg"><use href="#mag"/></svg>' : badge(kd, cls)}</div>`).join('');

const yelp = '<svg class="ic" viewBox="0 0 12 12"><path d="M5.500 1v4.500L3 2zM2 5l3 1.500L2 8zM5.500 7.500V11L3.500 10zM6.800 7.300l2.700 2-1.500 1.500zM7 6l2-2.500L10 5.500z" fill="#e0211b" stroke="#e0211b" stroke-width=".8"/></svg>';
const shield = '<svg class="ic" viewBox="0 0 12 12"><path d="M.8 0h10.400v7q0 3.500-5.200 5Q.8 10.500.8 7z" fill="#b5552d"/><path d="M5.200 0h1.600v12H5.200zM1 4.700h10v1.600H1z" fill="#f3ddd0"/><path d="M2 2h2M8 2h2M2 8.500h2M8 8.500h2" stroke="#e8a92c" stroke-width="1.500"/><circle cx="6" cy="5.500" r="1.300" fill="#c5302a"/></svg>';
const face = '<svg class="ic" viewBox="0 0 12 12"><ellipse cx="6" cy="6" rx="3.500" ry="4.500" fill="#d8d2c4"/><path d="M5 2.500h4v2H5z" fill="#9b9487"/><circle cx="6" cy="8" r="1.800" fill="#c48a7c"/></svg>';
const reverso = '<svg class="ic" viewBox="0 0 12 12"><circle cx="6" cy="6" r="5.500" fill="#eef5fa" stroke="#d4e5ef" stroke-width=".6"/><path d="M6 2l-2 2 2 2V5q2 0 2 2 1.500-3-2-4z" fill="#2a7fb8"/><path d="M6 10l2-2-2-2v1Q4 7 3.500 5 2 8.500 6 9z" fill="#e3262e"/></svg>';
const serp = [
  ['<span class="ic p">·p·</span>', 'pecherestaurant.com', '/', '', 54, 45, 46, 48, '1 k', '359', 70, 'r', '36.7 k'],
  ['<span class="ic wk">w</span>', 'en.wiktionary.org', '/wiki/pêche', '', 92, 51, 0, 0, '1', '0', 35, 'y', '14 k'],
  ['<span class="ic co">C</span>', 'collinsdictionary.com', '/us/diction', '…', 80, 37, 0, 0, '1', 'N/A', 28, 'g', '7.6 k'],
  ['<span class="ic w">W</span>', 'en.wikipedia.org', '/wiki/Peche', '', 98, 60, 4, 8, '33', 'N/A', 45, 'y', '5 k'],
  [yelp, 'yelp.com', '/biz/pêche-new-orleans', '', 93, 53, 0, 0, '1', '10', 36, 'y', '3.5 k'],
  [shield, 'dictionary.cambridge.org', '/us/dic', '…', 93, 41, 0, 0, '1', 'N/A', 32, 'y', '2.6 k'],
  [face, 'pecheaustin.com', '/', '', 48, 41, 42, 24, '2 k', '136', 54, 'o', '2 k'],
  [reverso, 'context.reverso.net', '/translation/f', '…', 86, 36, 0, 0, '1', 'N/A', 29, 'g', '1.6 k'],
  ['<span class="ic re">R</span>', 'resy.com', '/cities/no/peche', '', 63, 29, 34, 21, '9', 'N/A', 48, 'y', '1.3 k']
];
document.getElementById('serprows').innerHTML = serp.map(([ic, host, path, more, da, pa, cf, tf, links, fb, lps, cls, ev], i) => `
  <div class="sr"><span>${i + 1}</span><span class="u">${ic}<span><em>${host}</em>${path}<em>${more}</em></span></span>
  <span>${da}</span><span>${pa}</span><span>${cf}</span><span>${tf}</span><span>${links}</span><span>${fb}</span>${badge(lps, cls)}<span>${ev}</span>
  <svg class="dots" viewBox="0 0 4 12"><circle cx="2" cy="1.800" r="1.700"/><circle cx="2" cy="6" r="1.700"/><circle cx="2" cy="10.200" r="1.700"/></svg></div>`).join('');

/* monthly search volume, April 2015 to January 2020 */
const vols = [7,7,8.5,7,8.5,8.5,7,51,51,62,62,62,62,76,62,62,76,62,62,62,62,62,62,76,62,76,76,76,76,62,62,51,51,51,51,62,62,76,62,76,93,76,62,42,51,51,42,51,51,62,62,76,76,76,62,51,51,62];
const grid = [6.5, 54, 102].map(y => `<path d="M0 ${y}H575" stroke="#e6e9eb" stroke-dasharray="1 2"/>`).join('');
const bars = vols.map((v, i) => `<rect x="${(38 + i * 8.885).toFixed(2)}" y="${102 - v}" width="2" height="${v}" fill="#0a20c8"/>`).join('');
const ys = [['170 k', 23], ['85 k', 58], ['0', 106]].map(([t, y]) => `<text x="8" y="${y}">${t}</text>`).join('');
const xs = [["Apr '15", 40], ["Nov '15", 102], ["Jun '16", 164], ["Jan '17", 226], ["Aug '17", 288.5], ["Apr '18", 359.5], ["Nov '18", 421.5], ["Jan '20", 545.5]]
  .map(([t, x]) => `<text x="${x}" y="119" text-anchor="middle">${t}</text>`).join('');
document.getElementById('chart').innerHTML = grid + bars + ys + xs;
```
